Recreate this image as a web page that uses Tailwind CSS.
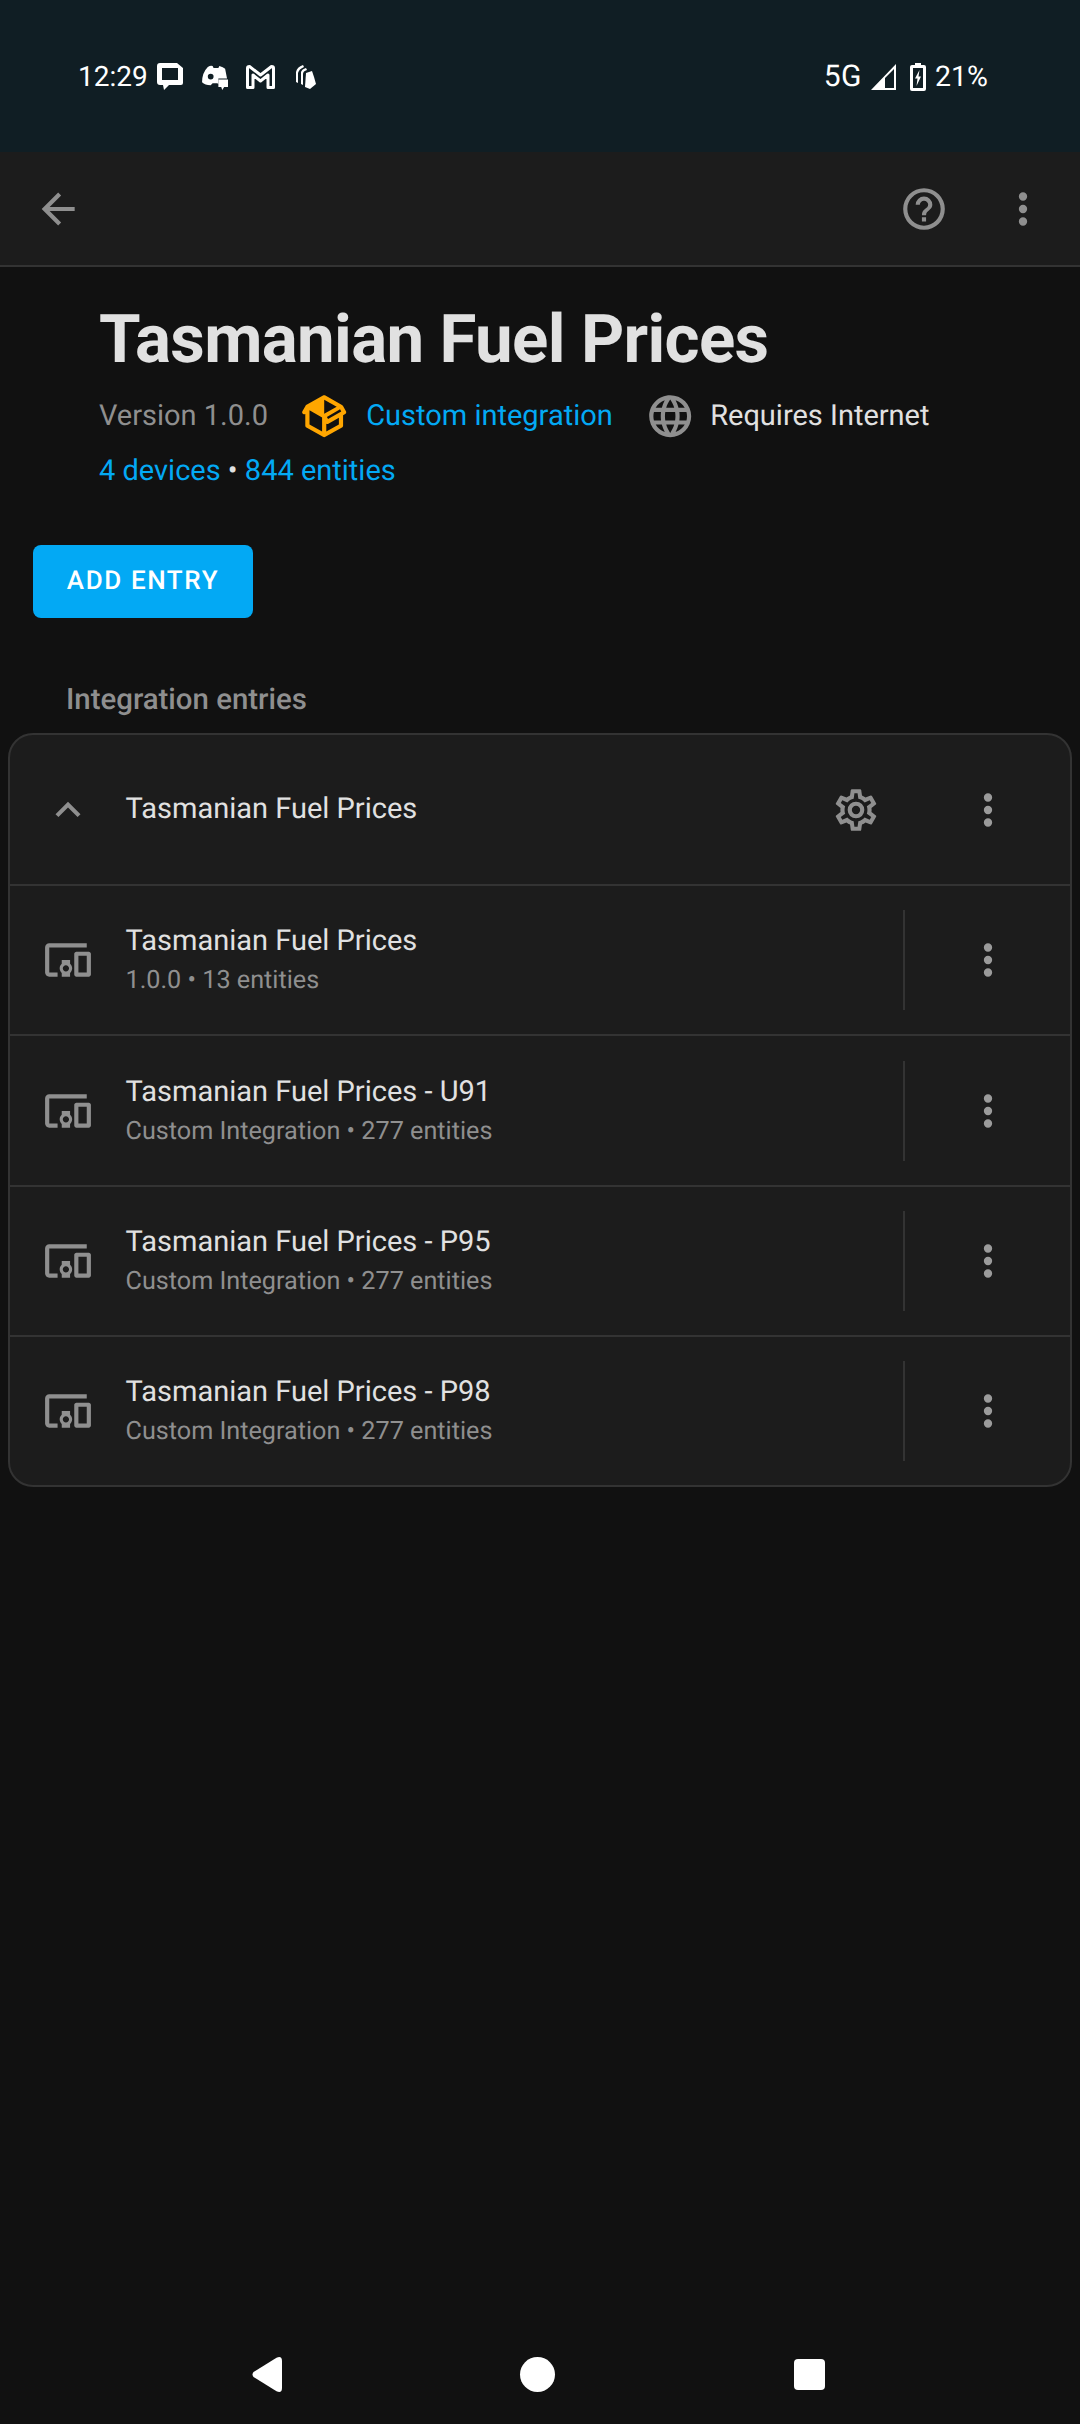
<!DOCTYPE html>
<html lang="en">
<head>
<meta charset="utf-8">
<title>Tasmanian Fuel Prices</title>
<script src="https://cdn.jsdelivr.net/npm/@tailwindcss/browser@4"></script>
</head>
<body class="bg-[#111111]">
<div class="w-[1080px] h-[2424px] flex flex-col bg-[#111111] font-['Roboto',sans-serif] overflow-hidden [text-rendering:geometricPrecision]">

  <!-- status bar -->
  <div class="h-[152px] shrink-0 bg-[#101e24] flex items-center justify-between pl-[78px] pr-[95px] pt-[2px] text-white">
    <div class="flex items-center">
      <span class="w-[69px] text-[28px] leading-[32px] font-normal">12:29</span>
      <svg class="ml-[10px]" width="26" height="28" viewBox="0 0 26 28" fill="#fff"><path fill-rule="evenodd" d="M3 0H20L26 5V20Q26 22 24 22H12L7 27L6 22H3Q0 22 0 19V3Q0 0 3 0ZM5 5V17H21V5Z"/></svg>
      <svg class="ml-[19px]" width="27" height="25" viewBox="0 0 28 26" fill="#fff"><path fill-rule="evenodd" d="M6 2Q9 0 11 1L12 3H17L18 1Q22 2 24 4L26 14H17V20L16 19H11L9 21Q3 21 0 18Q0 8 6 2ZM9 9A3 3 0 1 0 9 15A3 3 0 1 0 9 9Z"/><path d="M17 15H27V23H23L21 26L20 23H17Z"/></svg>
      <svg class="ml-[17px]" width="29" height="24" viewBox="0 0 29 24" fill="none" stroke="#fff" stroke-width="3" stroke-linejoin="round"><path d="M1.5 3Q1.5 1.5 3.5 1.5L14.5 10L25.5 1.5Q27.5 1.5 27.5 3V22.5H22V10L14.5 16L7 10V22.5H1.5Z"/></svg>
      <svg class="ml-[20px]" width="21" height="25" viewBox="0 0 21 25" fill="#fff"><path fill-rule="evenodd" d="M1 7Q2 2 8 0L9 2Q4 4 3 8V18L1 17ZM6 7Q7 4 11 3L12 5Q8 6 8 9V20L6 19Z"/><path d="M11 8L17 6L19 12L21 19L15 24L10 22Z"/></svg>
    </div>
    <div class="flex items-center">
      <span class="text-[30px] leading-[32px] tracking-[0.5px]">5G</span>
      <svg class="ml-[9px]" width="25" height="26" viewBox="0 0 25 26" fill="#fff"><path fill-rule="evenodd" d="M25 0V26H0ZM23 5L14 14V24H23Z"/></svg>
      <svg class="ml-[14px]" width="16" height="28" viewBox="0 0 16 28" fill="#fff"><path fill-rule="evenodd" d="M5 0H11V2H14Q16 2 16 4V26Q16 28 14 28H2Q0 28 0 26V4Q0 2 2 2H5ZM3 5V25H13V5ZM9.5 7L5 15.5H7.5L6.5 23L11 13.5H8.5Z"/></svg>
      <span class="ml-[9px] w-[50px] text-[28.5px] leading-[32px] whitespace-nowrap">21%</span>
    </div>
  </div>

  <!-- app bar -->
  <div class="h-[115px] shrink-0 bg-[#1c1c1c] border-b-2 border-[#333333] flex items-center pl-[33px] text-[#8f8f8f]">
    <svg class="w-[50px] h-[50px]" viewBox="0 0 24 24" fill="currentColor"><path d="M20,11V13H8L13.5,18.5L12.08,19.92L4.16,12L12.08,4.08L13.5,5.5L8,11H20Z"/></svg>
    <svg class="w-[50px] h-[50px] ml-[816px]" viewBox="0 0 24 24" fill="currentColor"><path d="M11,18H13V16H11V18M12,2A10,10 0 0,0 2,12A10,10 0 0,0 12,22A10,10 0 0,0 22,12A10,10 0 0,0 12,2M12,20C7.59,20 4,16.41 4,12C4,7.59 7.59,4 12,4C16.41,4 20,7.59 20,12C20,16.41 16.41,20 12,20M12,6A4,4 0 0,0 8,10H10A2,2 0 0,1 12,8A2,2 0 0,1 14,10C14,12 11,11.75 11,15H13C13,12.75 16,12.5 16,10A4,4 0 0,0 12,6Z"/></svg>
    <svg class="w-[50px] h-[50px] ml-[49px]" viewBox="0 0 24 24" fill="currentColor"><path d="M12,16A2,2 0 0,1 14,18A2,2 0 0,1 12,20A2,2 0 0,1 10,18A2,2 0 0,1 12,16M12,10A2,2 0 0,1 14,12A2,2 0 0,1 12,14A2,2 0 0,1 10,12A2,2 0 0,1 12,10M12,4A2,2 0 0,1 14,6A2,2 0 0,1 12,8A2,2 0 0,1 10,6A2,2 0 0,1 12,4Z"/></svg>
  </div>

  <!-- heading -->
  <div class="pl-[99px] pt-[33px]">
    <h1 class="text-[67.2px] leading-[80px] font-bold tracking-[-0.65px] text-[#e1e1e1]">Tasmanian Fuel Prices</h1>
    <div class="mt-[11px] flex items-center text-[29px] leading-[50px] h-[50px]">
      <span class="text-[#8f8f8f]">Version 1.0.0</span>
      <svg class="w-[50.4px] h-[50.4px] ml-[31px] text-[#ffa600]" viewBox="0 0 24 24" fill="currentColor"><path d="M2,10.96C1.5,10.68 1.35,10.07 1.63,9.59L3.13,7C3.24,6.8 3.41,6.66 3.6,6.58L11.43,2.18C11.59,2.06 11.79,2 12,2C12.21,2 12.41,2.06 12.57,2.18L20.47,6.62C20.66,6.72 20.82,6.88 20.91,7.08L22.36,9.6C22.64,10.08 22.47,10.69 22,10.96L21,11.54V16.5C21,16.88 20.79,17.21 20.47,17.38L12.57,21.82C12.41,21.94 12.21,22 12,22C11.79,22 11.59,21.94 11.43,21.82L3.53,17.38C3.21,17.21 3,16.88 3,16.5V10.96C2.7,11.13 2.32,11.14 2,10.96M12,4.15V4.15L12,10.85V10.85L17.96,7.5L12,4.15M5,15.91L11,19.29V12.58L5,9.21V15.91M19,15.91V12.69L14,15.59C13.67,15.77 13.3,15.76 13,15.6V19.29L19,15.91M13.85,13.36L20.13,9.73L19.55,8.72L13.27,12.35L13.85,13.36Z"/></svg>
      <span class="ml-[16.8px] text-[#03a9f4]">Custom integration</span>
      <svg class="w-[50.4px] h-[50.4px] ml-[32px] text-[#8f8f8f]" viewBox="0 0 24 24" fill="currentColor"><path d="M16.36,14C16.44,13.34 16.5,12.68 16.5,12C16.5,11.32 16.44,10.66 16.36,10H19.74C19.9,10.64 20,11.31 20,12C20,12.69 19.9,13.36 19.74,14M14.59,19.56C15.19,18.45 15.65,17.25 15.97,16H18.92C17.96,17.65 16.43,18.93 14.59,19.56M14.34,14H9.66C9.56,13.34 9.5,12.68 9.5,12C9.5,11.32 9.56,10.65 9.66,10H14.34C14.43,10.65 14.5,11.32 14.5,12C14.5,12.68 14.43,13.34 14.34,14M12,19.96C11.17,18.76 10.5,17.43 10.09,16H13.91C13.5,17.43 12.83,18.76 12,19.96M8,8H5.08C6.03,6.34 7.57,5.06 9.4,4.44C8.8,5.55 8.35,6.75 8,8M5.08,16H8C8.35,17.25 8.8,18.45 9.4,19.56C7.57,18.93 6.03,17.65 5.08,16M4.26,14C4.1,13.36 4,12.69 4,12C4,11.31 4.1,10.64 4.26,10H7.64C7.56,10.66 7.5,11.32 7.5,12C7.5,12.68 7.56,13.34 7.64,14M12,4.03C12.83,5.23 13.5,6.57 13.91,8H10.09C10.5,6.57 11.17,5.23 12,4.03M18.92,8H15.97C15.65,6.75 15.19,5.55 14.59,4.44C16.43,5.07 17.96,6.34 18.92,8M12,2C6.47,2 2,6.5 2,12A10,10 0 0,0 12,22A10,10 0 0,0 22,12A10,10 0 0,0 12,2Z"/></svg>
      <span class="ml-[15px] text-[#e1e1e1]">Requires Internet</span>
    </div>
    <div class="mt-[5px] text-[29px] leading-[50px] text-[#e1e1e1]"><span class="text-[#03a9f4]">4 devices</span> • <span class="text-[#03a9f4]">844 entities</span></div>
  </div>

  <!-- button -->
  <div class="pl-[33px] mt-[49px]">
    <div class="w-[220px] h-[73px] rounded-[8px] bg-[#03a9f4] flex items-center justify-center text-white text-[26px] font-medium tracking-[1.6px]">ADD ENTRY</div>
  </div>

  <h2 class="pl-[66px] mt-[62px] text-[29.4px] leading-[40px] font-medium text-[#8f8f8f]">Integration entries</h2>

  <!-- card -->
  <div class="mt-[13px] mx-[8px] w-[1064px] rounded-[25px] border-2 border-[#333333] bg-[#1c1c1c] text-[#e1e1e1]">
    <div class="h-[151px] border-b-2 border-[#333333] flex items-center pl-[33px] text-[#8f8f8f]">
      <svg class="w-[50px] h-[50px] shrink-0" viewBox="0 0 24 24" fill="currentColor"><path d="M7.41,15.41L12,10.83L16.59,15.41L18,14L12,8L6,14L7.41,15.41Z"/></svg>
      <span class="ml-[32.5px] text-[29px] leading-[40px] text-[#e1e1e1] flex-1 -mt-[2px]">Tasmanian Fuel Prices</span>
      <svg class="w-[50px] h-[50px] shrink-0" viewBox="0 0 24 24" fill="currentColor"><path d="M12,8A4,4 0 0,1 16,12A4,4 0 0,1 12,16A4,4 0 0,1 8,12A4,4 0 0,1 12,8M12,10A2,2 0 0,0 10,12A2,2 0 0,0 12,14A2,2 0 0,0 14,12A2,2 0 0,0 12,10M10,22C9.75,22 9.54,21.82 9.5,21.58L9.13,18.93C8.5,18.68 7.96,18.34 7.44,17.94L4.95,18.95C4.73,19.03 4.46,18.95 4.34,18.73L2.34,15.27C2.21,15.05 2.27,14.78 2.46,14.63L4.57,12.97L4.5,12L4.57,11L2.46,9.37C2.27,9.22 2.21,8.95 2.34,8.73L4.34,5.27C4.46,5.05 4.73,4.96 4.95,5.05L7.44,6.05C7.96,5.66 8.5,5.32 9.13,5.07L9.5,2.42C9.54,2.18 9.75,2 10,2H14C14.25,2 14.46,2.18 14.5,2.42L14.87,5.07C15.5,5.32 16.04,5.66 16.56,6.05L19.05,5.05C19.27,4.96 19.54,5.05 19.66,5.27L21.66,8.73C21.79,8.95 21.73,9.22 21.54,9.37L19.43,11L19.5,12L19.43,13L21.54,14.63C21.73,14.78 21.79,15.05 21.66,15.27L19.66,18.73C19.54,18.95 19.27,19.04 19.05,18.95L16.56,17.95C16.04,18.34 15.5,18.68 14.87,18.93L14.5,21.58C14.46,21.82 14.25,22 14,22H10M11.25,4L10.88,6.61C9.68,6.86 8.62,7.5 7.85,8.39L5.44,7.35L4.69,8.65L6.8,10.2C6.4,11.37 6.4,12.64 6.8,13.8L4.68,15.36L5.43,16.66L7.86,15.62C8.63,16.5 9.68,17.14 10.87,17.38L11.24,20H12.76L13.13,17.39C14.32,17.14 15.37,16.5 16.14,15.62L18.57,16.66L19.32,15.36L17.2,13.81C17.6,12.64 17.6,11.37 17.2,10.2L19.31,8.65L18.56,7.35L16.15,8.39C15.38,7.5 14.32,6.86 13.12,6.62L12.75,4H11.25Z"/></svg>
      <svg class="w-[50px] h-[50px] shrink-0 ml-[82px] mr-[57px] text-[#9b9b9b]" viewBox="0 0 24 24" fill="currentColor"><path d="M12,16A2,2 0 0,1 14,18A2,2 0 0,1 12,20A2,2 0 0,1 10,18A2,2 0 0,1 12,16M12,10A2,2 0 0,1 14,12A2,2 0 0,1 12,14A2,2 0 0,1 10,12A2,2 0 0,1 12,10M12,4A2,2 0 0,1 14,6A2,2 0 0,1 12,8A2,2 0 0,1 10,6A2,2 0 0,1 12,4Z"/></svg>
    </div>

    <div class="h-[150px] border-b-2 border-[#333333] flex items-center pl-[33px] text-[#8f8f8f]">
      <svg class="w-[50px] h-[50px] shrink-0" viewBox="0 0 24 24" fill="currentColor"><path d="M3 6H21V4H3C1.9 4 1 4.9 1 6V18C1 19.1 1.9 20 3 20H7V18H3V6M13 12H9V13.78C8.39 14.33 8 15.11 8 16C8 16.89 8.39 17.67 9 18.22V20H13V18.22C13.61 17.67 14 16.88 14 16S13.61 14.33 13 13.78V12M11 17.5C10.17 17.5 9.5 16.83 9.5 16S10.17 14.5 11 14.5 12.5 15.17 12.5 16 11.83 17.5 11 17.5M22 8H16C15.5 8 15 8.5 15 9V19C15 19.5 15.5 20 16 20H22C22.5 20 23 19.5 23 19V9C23 8.5 22.5 8 22 8M21 18H17V10H21V18Z"/></svg>
      <div class="ml-[32.5px] flex-1">
        <div class="text-[29px] leading-[40px] text-[#e1e1e1]">Tasmanian Fuel Prices</div>
        <div class="mt-[2px] text-[25.2px] leading-[36px] text-[#8f8f8f]">1.0.0 • 13 entities</div>
      </div>
      <div class="w-[2px] h-[100px] bg-[#333333]"></div>
      <svg class="w-[50px] h-[50px] shrink-0 ml-[58px] mr-[57px] text-[#9b9b9b]" viewBox="0 0 24 24" fill="currentColor"><path d="M12,16A2,2 0 0,1 14,18A2,2 0 0,1 12,20A2,2 0 0,1 10,18A2,2 0 0,1 12,16M12,10A2,2 0 0,1 14,12A2,2 0 0,1 12,14A2,2 0 0,1 10,12A2,2 0 0,1 12,10M12,4A2,2 0 0,1 14,6A2,2 0 0,1 12,8A2,2 0 0,1 10,6A2,2 0 0,1 12,4Z"/></svg>
    </div>

    <div class="h-[151px] border-b-2 border-[#333333] flex items-center pl-[33px] text-[#8f8f8f]">
      <svg class="w-[50px] h-[50px] shrink-0" viewBox="0 0 24 24" fill="currentColor"><path d="M3 6H21V4H3C1.9 4 1 4.9 1 6V18C1 19.1 1.9 20 3 20H7V18H3V6M13 12H9V13.78C8.39 14.33 8 15.11 8 16C8 16.89 8.39 17.67 9 18.22V20H13V18.22C13.61 17.67 14 16.88 14 16S13.61 14.33 13 13.78V12M11 17.5C10.17 17.5 9.5 16.83 9.5 16S10.17 14.5 11 14.5 12.5 15.17 12.5 16 11.83 17.5 11 17.5M22 8H16C15.5 8 15 8.5 15 9V19C15 19.5 15.5 20 16 20H22C22.5 20 23 19.5 23 19V9C23 8.5 22.5 8 22 8M21 18H17V10H21V18Z"/></svg>
      <div class="ml-[32.5px] flex-1">
        <div class="text-[29px] leading-[40px] text-[#e1e1e1]">Tasmanian Fuel Prices - U91</div>
        <div class="mt-[2px] text-[25.2px] leading-[36px] text-[#8f8f8f]">Custom Integration • 277 entities</div>
      </div>
      <div class="w-[2px] h-[100px] bg-[#333333]"></div>
      <svg class="w-[50px] h-[50px] shrink-0 ml-[58px] mr-[57px] text-[#9b9b9b]" viewBox="0 0 24 24" fill="currentColor"><path d="M12,16A2,2 0 0,1 14,18A2,2 0 0,1 12,20A2,2 0 0,1 10,18A2,2 0 0,1 12,16M12,10A2,2 0 0,1 14,12A2,2 0 0,1 12,14A2,2 0 0,1 10,12A2,2 0 0,1 12,10M12,4A2,2 0 0,1 14,6A2,2 0 0,1 12,8A2,2 0 0,1 10,6A2,2 0 0,1 12,4Z"/></svg>
    </div>

    <div class="h-[150px] border-b-2 border-[#333333] flex items-center pl-[33px] text-[#8f8f8f]">
      <svg class="w-[50px] h-[50px] shrink-0" viewBox="0 0 24 24" fill="currentColor"><path d="M3 6H21V4H3C1.9 4 1 4.9 1 6V18C1 19.1 1.9 20 3 20H7V18H3V6M13 12H9V13.78C8.39 14.33 8 15.11 8 16C8 16.89 8.39 17.67 9 18.22V20H13V18.22C13.61 17.67 14 16.88 14 16S13.61 14.33 13 13.78V12M11 17.5C10.17 17.5 9.5 16.83 9.5 16S10.17 14.5 11 14.5 12.5 15.17 12.5 16 11.83 17.5 11 17.5M22 8H16C15.5 8 15 8.5 15 9V19C15 19.5 15.5 20 16 20H22C22.5 20 23 19.5 23 19V9C23 8.5 22.5 8 22 8M21 18H17V10H21V18Z"/></svg>
      <div class="ml-[32.5px] flex-1">
        <div class="text-[29px] leading-[40px] text-[#e1e1e1]">Tasmanian Fuel Prices - P95</div>
        <div class="mt-[2px] text-[25.2px] leading-[36px] text-[#8f8f8f]">Custom Integration • 277 entities</div>
      </div>
      <div class="w-[2px] h-[100px] bg-[#333333]"></div>
      <svg class="w-[50px] h-[50px] shrink-0 ml-[58px] mr-[57px] text-[#9b9b9b]" viewBox="0 0 24 24" fill="currentColor"><path d="M12,16A2,2 0 0,1 14,18A2,2 0 0,1 12,20A2,2 0 0,1 10,18A2,2 0 0,1 12,16M12,10A2,2 0 0,1 14,12A2,2 0 0,1 12,14A2,2 0 0,1 10,12A2,2 0 0,1 12,10M12,4A2,2 0 0,1 14,6A2,2 0 0,1 12,8A2,2 0 0,1 10,6A2,2 0 0,1 12,4Z"/></svg>
    </div>

    <div class="h-[148px] flex items-center pl-[33px] text-[#8f8f8f]">
      <svg class="w-[50px] h-[50px] shrink-0" viewBox="0 0 24 24" fill="currentColor"><path d="M3 6H21V4H3C1.9 4 1 4.9 1 6V18C1 19.1 1.9 20 3 20H7V18H3V6M13 12H9V13.78C8.39 14.33 8 15.11 8 16C8 16.89 8.39 17.67 9 18.22V20H13V18.22C13.61 17.67 14 16.88 14 16S13.61 14.33 13 13.78V12M11 17.5C10.17 17.5 9.5 16.83 9.5 16S10.17 14.5 11 14.5 12.5 15.17 12.5 16 11.83 17.5 11 17.5M22 8H16C15.5 8 15 8.5 15 9V19C15 19.5 15.5 20 16 20H22C22.5 20 23 19.5 23 19V9C23 8.5 22.5 8 22 8M21 18H17V10H21V18Z"/></svg>
      <div class="ml-[32.5px] flex-1">
        <div class="text-[29px] leading-[40px] text-[#e1e1e1]">Tasmanian Fuel Prices - P98</div>
        <div class="mt-[2px] text-[25.2px] leading-[36px] text-[#8f8f8f]">Custom Integration • 277 entities</div>
      </div>
      <div class="w-[2px] h-[100px] bg-[#333333]"></div>
      <svg class="w-[50px] h-[50px] shrink-0 ml-[58px] mr-[57px] text-[#9b9b9b]" viewBox="0 0 24 24" fill="currentColor"><path d="M12,16A2,2 0 0,1 14,18A2,2 0 0,1 12,20A2,2 0 0,1 10,18A2,2 0 0,1 12,16M12,10A2,2 0 0,1 14,12A2,2 0 0,1 12,14A2,2 0 0,1 10,12A2,2 0 0,1 12,10M12,4A2,2 0 0,1 14,6A2,2 0 0,1 12,8A2,2 0 0,1 10,6A2,2 0 0,1 12,4Z"/></svg>
    </div>
  </div>

  <!-- nav bar -->
  <div class="mt-auto h-[100px] shrink-0 flex items-center pl-[252px]">
    <svg width="30" height="35" viewBox="0 0 30 35" fill="#fff"><path d="M1.5 15L24.5 .8Q30 -1.5 30 4V31Q30 36.5 24.5 34.2L1.5 20Q-.5 17.5 1.5 15Z"/></svg>
    <div class="ml-[238px] w-[35px] h-[35px] rounded-full bg-white"></div>
    <div class="ml-[239px] w-[31px] h-[31px] rounded-[4px] bg-white"></div>
  </div>
</div>
</body>
</html>
